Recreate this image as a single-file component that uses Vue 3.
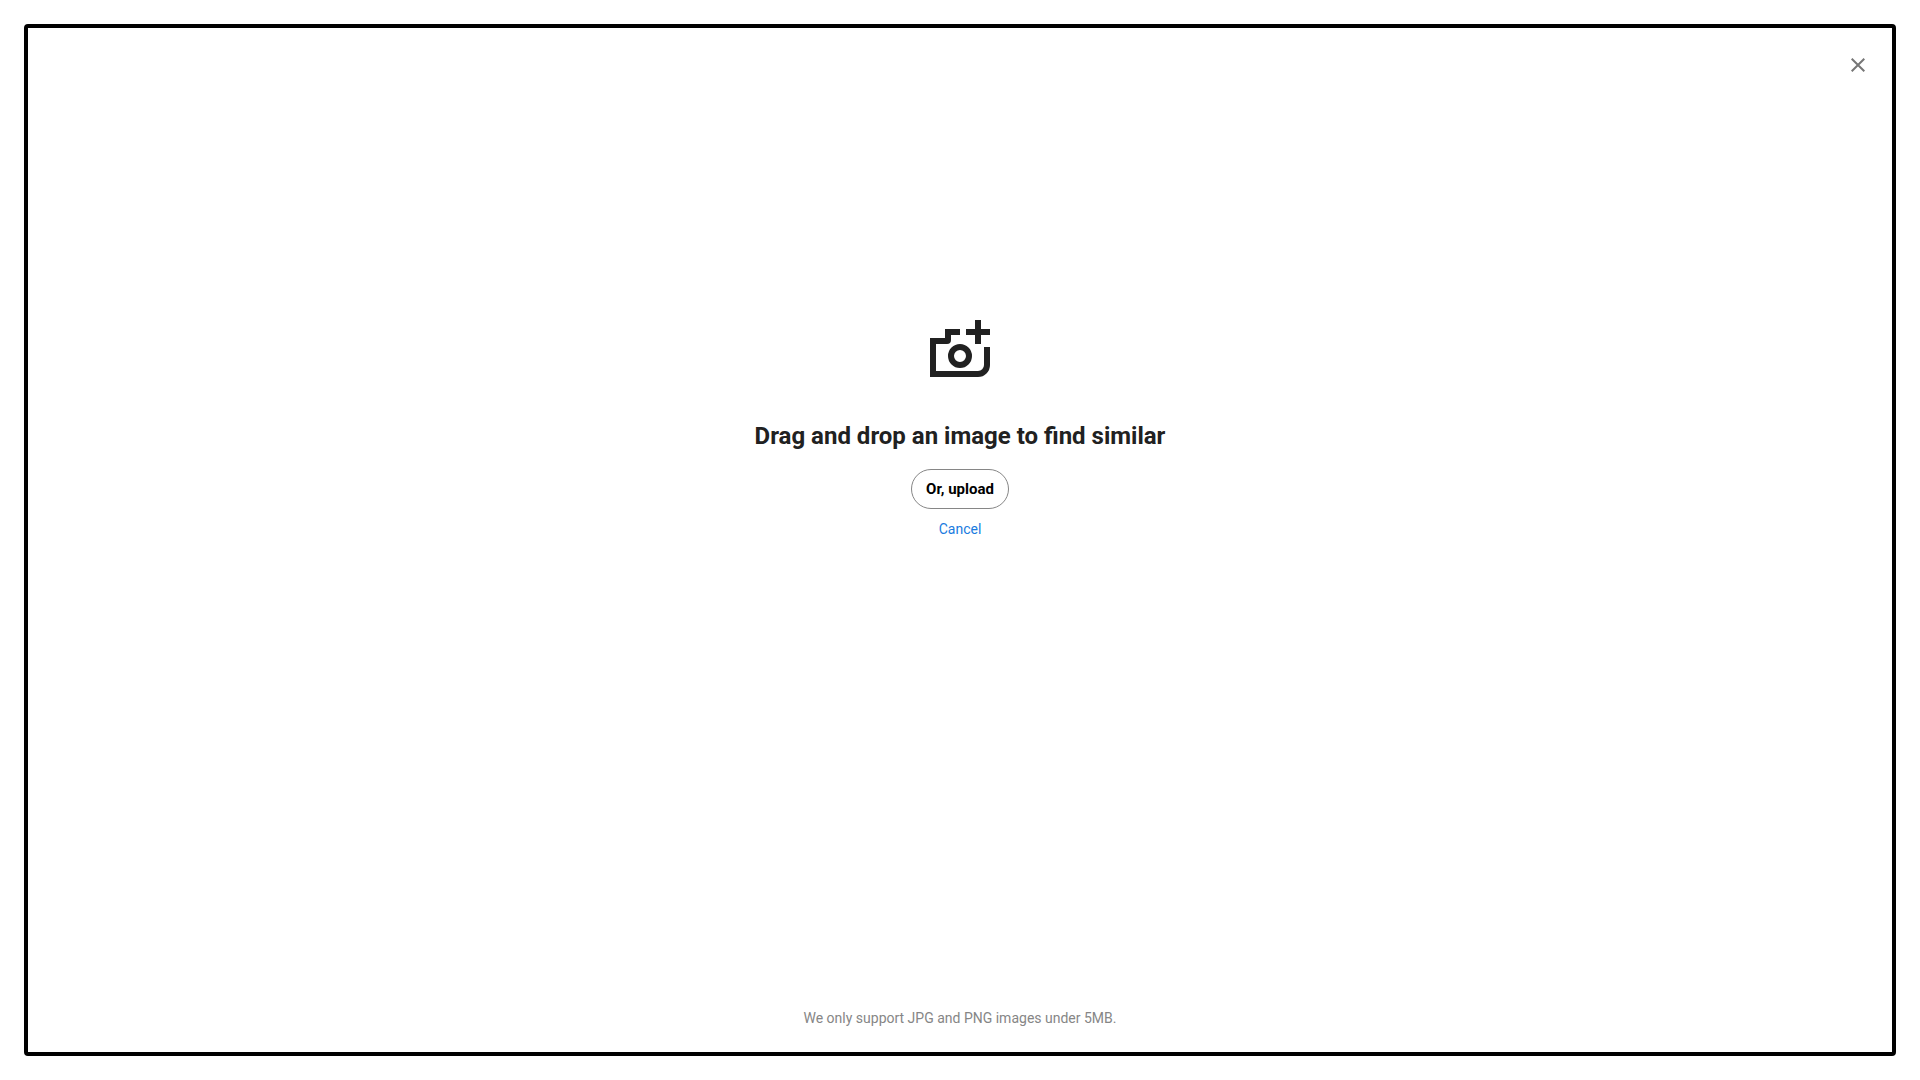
<script setup>
import { ref } from 'vue'

const fileInput = ref(null)
const openPicker = () => fileInput.value?.click()
</script>

<template>
  <div class="page">
    <main class="dropzone" @dragover.prevent @drop.prevent>
      <header class="top">
        <button class="close" type="button" aria-label="Close">
          <svg width="14" height="14" viewBox="0 0 14 14" aria-hidden="true">
            <path d="M0.7 0.7 13.3 13.3M13.3 0.7 0.7 13.3" fill="none" stroke="#767676" stroke-width="2" />
          </svg>
        </button>
      </header>
      <section class="content">
        <svg class="camera" width="60" height="57" viewBox="0 0 60 57" fill="none" stroke="#212121" stroke-width="6" aria-hidden="true">
          <path d="M30 12H18V20a1 1 0 0 1-1 1H3V54H48a9 9 0 0 0 9-9V27" />
          <circle cx="30" cy="36" r="9" />
          <path d="M36 12H60M48 0V24" />
        </svg>
        <h1 class="title">Drag and drop an image to find similar</h1>
        <input ref="fileInput" type="file" accept="image/jpeg,image/png" aria-label="Image file" hidden />
        <button class="upload" type="button" @click="openPicker">Or, upload</button>
        <a class="cancel" href="#">Cancel</a>
      </section>
      <p class="note">We only support JPG and PNG images under 5MB.</p>
    </main>
  </div>
</template>

<style>
body {
  margin: 0;
  background: #fff;
}
</style>

<style scoped>
.page {
  box-sizing: border-box;
  display: flex;
  min-height: 100vh;
  padding: 24px;
  font-family: Roboto, sans-serif;
  font-size: 14px;
  line-height: 20px;
}

.dropzone {
  flex: 1;
  display: flex;
  flex-direction: column;
  align-items: center;
  border: 4px solid #000;
  border-radius: 4px;
}

.top {
  align-self: stretch;
  display: flex;
  justify-content: flex-end;
  padding: 25px 22px 23px;
}

.close {
  display: flex;
  align-items: center;
  justify-content: center;
  width: 24px;
  height: 24px;
  padding: 0;
  border: 0;
  background: none;
  cursor: pointer;
}

.content {
  flex: 1;
  display: flex;
  flex-direction: column;
  align-items: center;
  padding-top: 220px;
}

.title {
  margin: 43px 0 17px;
  color: #212121;
  font-size: 24px;
  line-height: 32px;
  font-weight: 700;
}

.upload {
  height: 40px;
  padding: 0 14px;
  border: 1px solid #868686;
  border-radius: 20px;
  background: #fff;
  color: #000;
  font-family: inherit;
  font-size: 15px;
  font-weight: 700;
  cursor: pointer;
}

.cancel {
  margin-top: 10px;
  color: #1a7be0;
  text-decoration: none;
}

.note {
  margin: 0 0 24px;
  color: #868686;
}
</style>
